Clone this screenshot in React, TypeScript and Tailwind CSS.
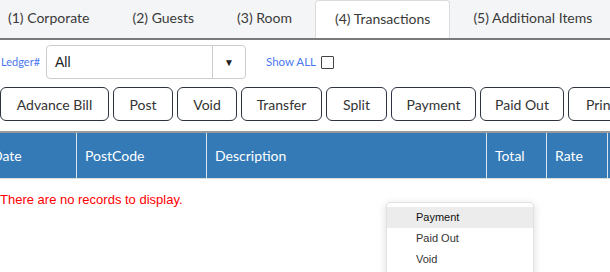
const tabs = ['(1) Corporate', '(2) Guests', '(3) Room', '(4) Transactions', '(5) Additional Items']

const buttons: [string, string][] = [
  ['Advance Bill', 'w-[109px] justify-center'],
  ['Post', 'w-[60px] justify-center'],
  ['Void', 'w-[60px] justify-center'],
  ['Transfer', 'w-[81px] justify-center'],
  ['Split', 'w-[61px] justify-center'],
  ['Payment', 'w-[85px] justify-center'],
  ['Paid Out', 'w-[84px] justify-center'],
  ['Print', 'w-[84px] justify-start pl-[17px]'],
]

const columns: [string, string][] = [
  ['Date', 'w-[93px]'],
  ['PostCode', 'w-[130px]'],
  ['Description', 'w-[280px]'],
  ['Total', 'w-[60px]'],
  ['Rate', 'w-[61px]'],
  ['', 'w-[60px]'],
]

export default function App() {
  return (
    <div className="relative w-[610px] h-[272px] overflow-hidden bg-white font-['Lato','Open_Sans',sans-serif] text-[#333]">
      {/* tab strip */}
      <div className="h-[40px] bg-[#f4f5f7] border-b-2 border-[#7a7a7a] flex items-end">
        <div className="flex gap-[3px] -ml-[12px]">
          {tabs.map((t) => {
            const active = t.startsWith('(4)')
            return (
              <div
                key={t}
                className={
                  active
                    ? 'h-[38px] px-[19px] pb-[3px] flex items-center bg-white border border-b-0 border-[#dcdcdc] rounded-t-[4px] text-[14px] text-[#3a3a3a] whitespace-nowrap'
                    : 'h-[38px] px-[19px] pb-[3px] flex items-center border border-transparent text-[14px] text-[#3a3a3a] whitespace-nowrap'
                }
              >
                {t}
              </div>
            )
          })}
        </div>
      </div>

      {/* ledger row */}
      <div className="flex items-center mt-[5px] h-[34px]">
        <span className="ml-[1px] w-[45px] text-[11px] text-[#4a78f0]">Ledger#</span>
        <div className="w-[200px] h-[34px] border border-[#cccccc] rounded-[4px] flex items-center">
          <span className="flex-1 pl-[8px] text-[14px] text-[#222] font-['Liberation_Sans',Arial,sans-serif]">All</span>
          <div className="w-[33px] h-full border-l border-[#cccccc] flex items-center justify-center text-[10px] text-[#222]">
            ▼
          </div>
        </div>
        <span className="ml-[20px] text-[11.5px] text-[#4a78f0]">Show ALL</span>
        <span className="ml-[5px] w-[13px] h-[13px] border border-[#444] rounded-[1px]" />
      </div>

      {/* action buttons */}
      <div className="flex gap-[4px] mt-[8px] whitespace-nowrap">
        {buttons.map(([b, w]) => (
          <div
            key={b}
            className={`${w} shrink-0 h-[34px] border border-[#2d3340] rounded-[6px] flex items-center text-[14px] text-[#333]`}
          >
            {b}
          </div>
        ))}
      </div>

      {/* grid */}
      <div className="mt-[10px] border-t-2 border-[#9a9a9a]">
        <div className="flex h-[46px] bg-[#337ab7] border-b border-[#dddddd] -ml-[16px]">
          {columns.map(([c, w], i) => (
            <div
              key={i}
              className={`${w} shrink-0 flex items-center px-[8px] border-r border-[#d8e4f0] text-[14px] text-white`}
            >
              {c}
            </div>
          ))}
        </div>
        <div className="pt-[11px] text-[13px] text-[#ff0000] font-['Liberation_Sans',Arial,sans-serif]">
          There are no records to display.
        </div>
      </div>

      {/* popup menu */}
      <div className="absolute left-[386px] top-[202px] w-[148px] h-[90px] bg-white border border-[#e2e2e2] rounded-[4px] shadow-[0_2px_8px_rgba(0,0,0,0.15)] pt-[4px] font-['Liberation_Sans',Arial,sans-serif] text-[11px] text-[#333]">
        <div className="h-[21px] flex items-center pl-[29px] bg-[#ececec] text-[#111]">Payment</div>
        <div className="h-[21px] flex items-center pl-[29px]">Paid Out</div>
        <div className="h-[21px] flex items-center pl-[29px]">Void</div>
      </div>
    </div>
  )
}
